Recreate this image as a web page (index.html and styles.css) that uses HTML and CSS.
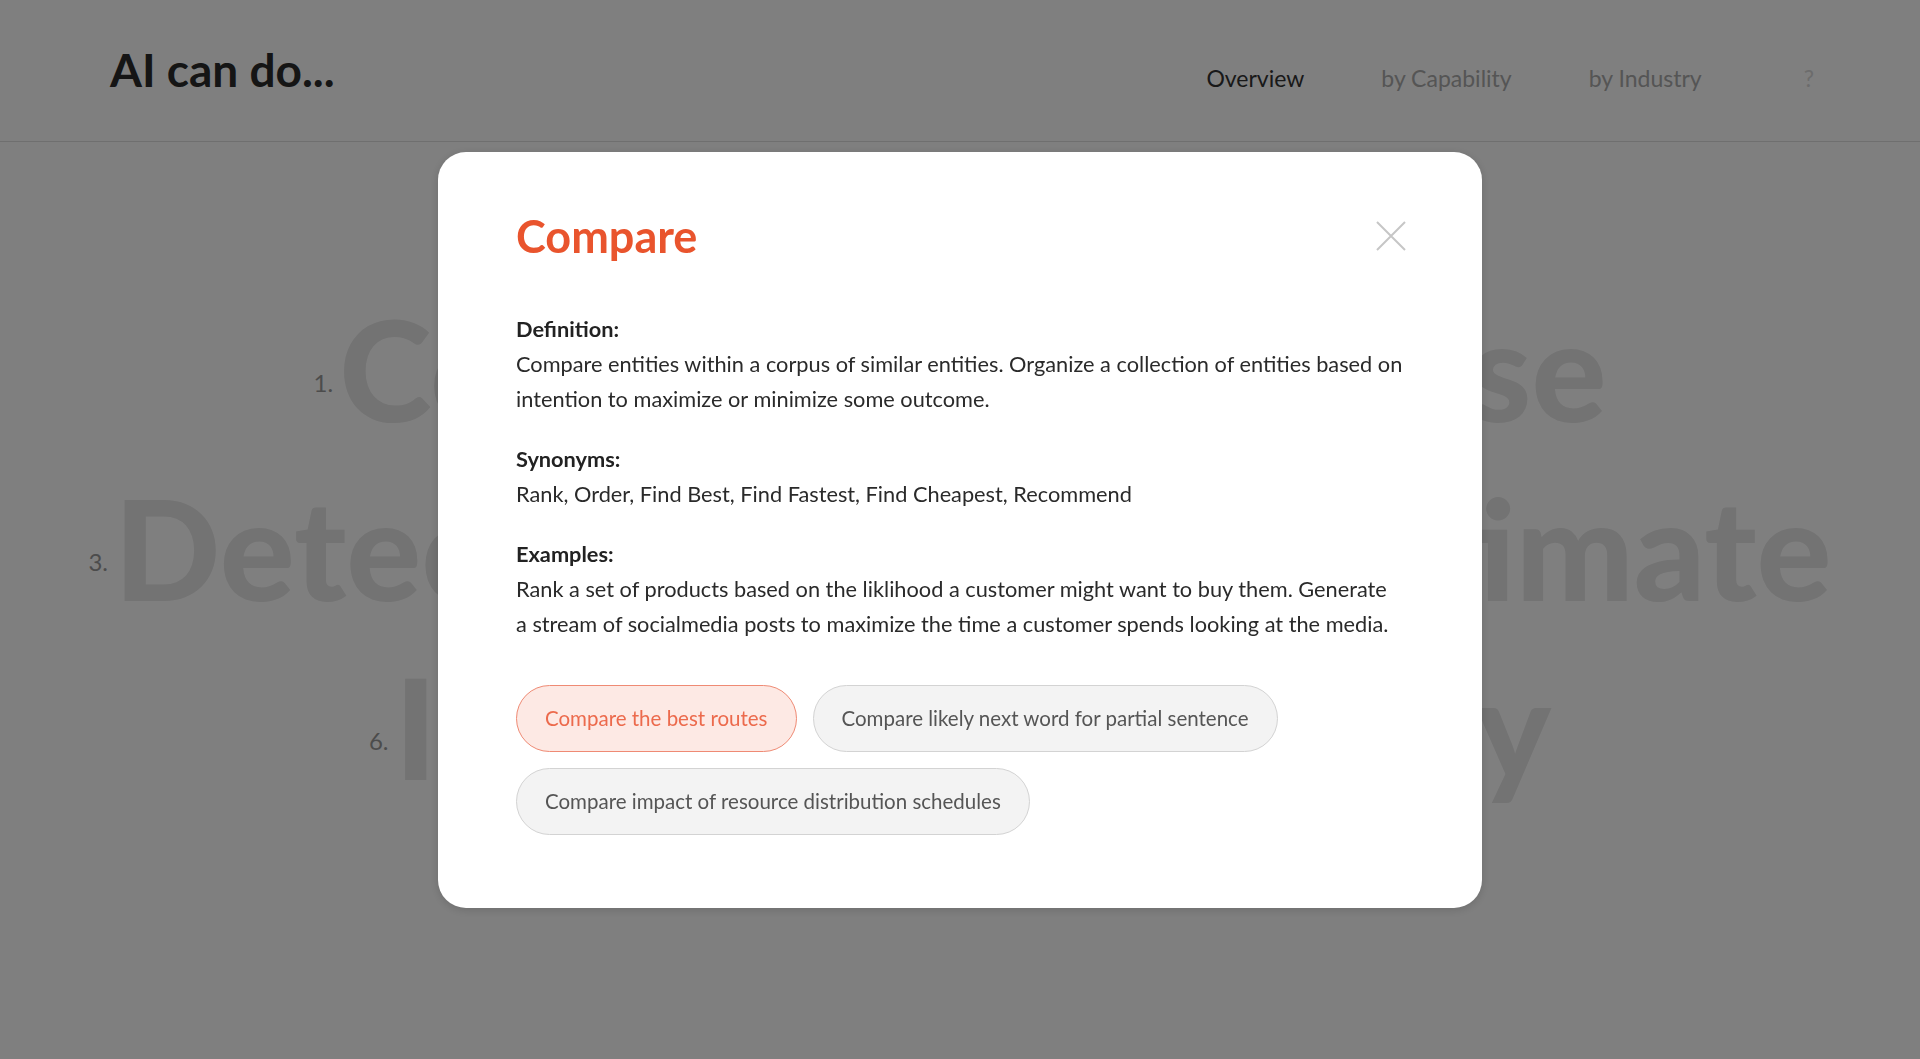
FILE: index.html
```html
<!DOCTYPE html>
<html lang="en">
<head>
    <meta charset="UTF-8">
    <meta name="viewport" content="width=device-width, initial-scale=1.0">
    <title>AI can do...</title>
    <link rel="stylesheet" href="styles.css">
</head>
<body>

<header class="topbar">
    <h1 class="brand">AI can do...</h1>
    <nav class="menu">
        <a class="menu-link active" href="#">Overview</a>
        <a class="menu-link" href="#">by Capability</a>
        <a class="menu-link" href="#">by Industry</a>
        <a class="menu-link help" href="#">?</a>
    </nav>
</header>

<!-- big list of capabilities -->
<main class="verbs">
    <div class="verb-row">
        <div class="verb"><span class="num">1.</span><span class="word">Compare</span></div>
        <div class="verb"><span class="num">2.</span><span class="word">Converse</span></div>
    </div>
    <div class="verb-row">
        <div class="verb"><span class="num">3.</span><span class="word">Detect</span></div>
        <div class="verb"><span class="num">4.</span><span class="word">Monitor</span></div>
        <div class="verb"><span class="num">5.</span><span class="word">Estimate</span></div>
    </div>
    <div class="verb-row">
        <div class="verb"><span class="num">6.</span><span class="word">Interpret</span></div>
        <div class="verb"><span class="num">7.</span><span class="word">Classify</span></div>
    </div>
</main>

<!-- popup -->
<div class="overlay">
    <div class="modal">
        <div class="modal-head">
            <h2 class="modal-title">Compare</h2>
            <button class="close" aria-label="Close">
                <svg width="30" height="30" viewBox="0 0 30 30">
                    <path d="M1 1 L29 29 M29 1 L1 29" stroke="#c6c6c6" stroke-width="2" fill="none"/>
                </svg>
            </button>
        </div>

        <div class="section">
            <h3>Definition:</h3>
            <p>Compare entities within a corpus of similar entities. Organize a collection of entities based on intention to maximize or minimize some outcome.</p>
        </div>
        <div class="section">
            <h3>Synonyms:</h3>
            <p>Rank, Order, Find Best, Find Fastest, Find Cheapest, Recommend</p>
        </div>
        <div class="section">
            <h3>Examples:</h3>
            <p class="examples">Rank a set of products based on the liklihood a customer might want to buy them. Generate a stream of socialmedia posts to maximize the time a customer spends looking at the media.</p>
        </div>

        <div class="chips">
            <button class="chip selected">Compare the best routes</button>
            <button class="chip">Compare likely next word for partial sentence</button>
            <button class="chip">Compare impact of resource distribution schedules</button>
        </div>
    </div>
</div>

</body>
</html>
```

FILE: styles.css
```css
* {
    box-sizing: border-box;
}
body {
    margin: 0;
    font-family: Lato, "Liberation Sans", sans-serif;
    background-color: #ffffff;
    color: #333;
}

/* top bar */
.topbar {
    display: flex;
    align-items: baseline;
    justify-content: space-between;
    height: 142px;
    padding: 44px 106px 0 110px;
    border-bottom: 1px solid #dedede;
}
.brand {
    margin: 0;
    font-size: 46px;
    line-height: 52px;
    font-weight: 700;
    color: #2b2b2b;
}
.menu {
    display: flex;
    align-items: baseline;
    gap: 77px;
}
.menu-link {
    font-size: 23px;
    color: #aaaaaa;
    text-decoration: none;
}
.menu-link.active {
    color: #333;
}
.menu-link.help {
    margin-left: 25px;
    color: #d8d8d8;
}

/* big words behind the popup */
.verbs {
    padding-top: 137px;
}
.verb-row {
    display: flex;
    justify-content: center;
    gap: 88px;
}
.verb {
    display: flex;
    align-items: center;
    gap: 6px;
}
.num {
    margin-top: 28px;
    font-size: 24px;
    color: #999;
}
.word {
    font-size: 140px;
    line-height: 179px;
    font-weight: 900;
    color: #e6e6e6;
}

/* popup */
.overlay {
    position: fixed;
    top: 0;
    left: 0;
    right: 0;
    bottom: 0;
    display: flex;
    justify-content: center;
    align-items: flex-start;
    padding-top: 152px;
    background-color: rgba(0, 0, 0, 0.5);
}
.modal {
    width: 1044px;
    padding: 58px 76px 73px 78px;
    background-color: #fff;
    border-radius: 28px;
    box-shadow: 0 2px 10px rgba(0, 0, 0, 0.15);
}
.modal-head {
    display: flex;
    justify-content: space-between;
    align-items: center;
    margin-bottom: 50px;
}
.modal-title {
    margin: 0;
    font-size: 45px;
    line-height: 52px;
    font-weight: 700;
    color: #e9542d;
}
.close {
    display: flex;
    padding: 0;
    border: none;
    background: none;
    cursor: pointer;
}
.section {
    margin-bottom: 25px;
    font-size: 21.75px;
    line-height: 35px;
}
.section h3 {
    margin: 0;
    font-size: 21.75px;
    font-weight: 700;
    color: #222;
}
.section p {
    margin: 0;
    color: #2a2a2a;
}
.section .examples {
    padding-right: 10px; /* keeps "a stream" on the second line */
}
.chips {
    display: flex;
    flex-wrap: wrap;
    gap: 16px;
    margin-top: 43px;
}
.chip {
    padding: 15px 28px;
    font-family: Lato, "Liberation Sans", sans-serif;
    font-size: 20.5px;
    line-height: 35px;
    color: #555;
    background-color: #f3f3f3;
    border: 1px solid #d3d3d3;
    border-radius: 34px;
    cursor: pointer;
}
.chip.selected {
    color: #ec6a4c;
    background-color: #fde9e4;
    border-color: #ef8a74;
}
```
